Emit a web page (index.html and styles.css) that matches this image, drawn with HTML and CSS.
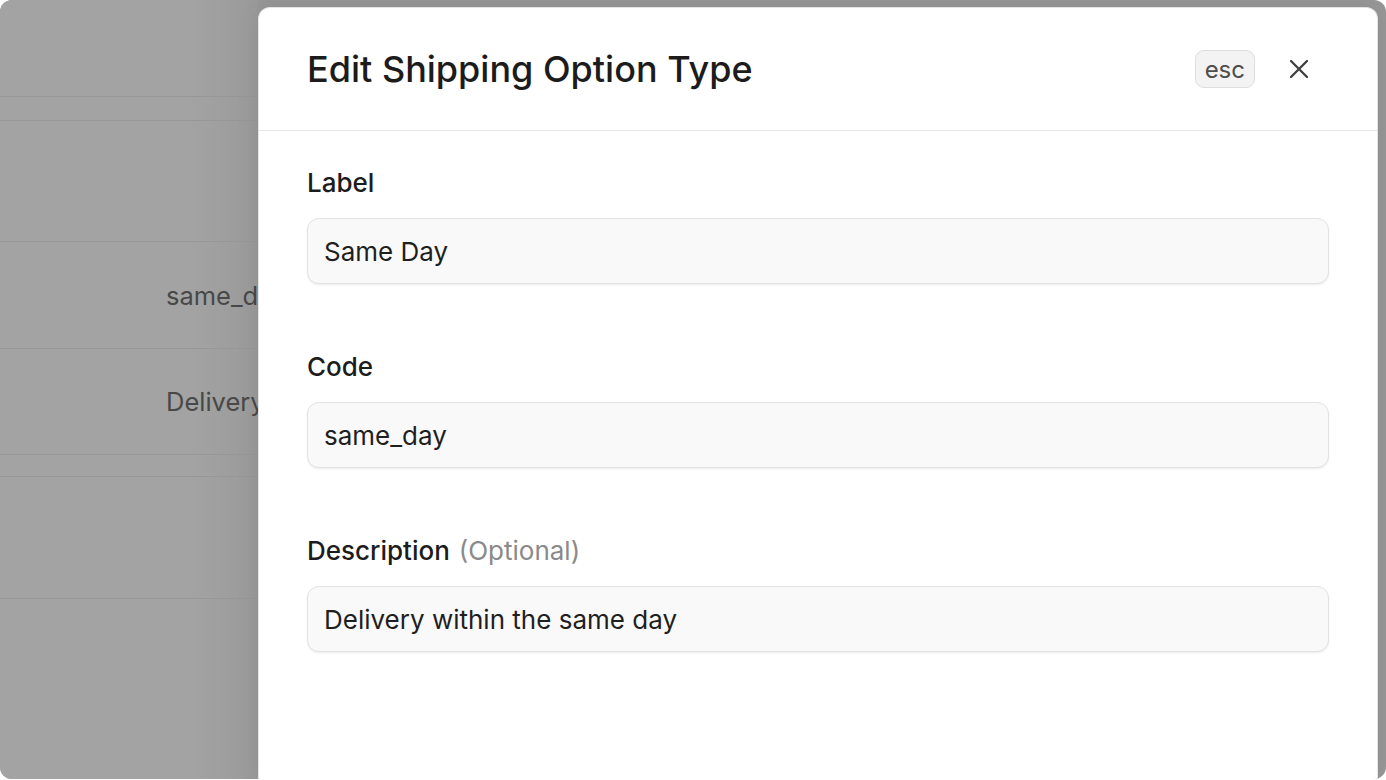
FILE: index.html
```html
<!DOCTYPE html>
<html lang="en">
<head>
<meta charset="utf-8">
<title>Edit Shipping Option Type</title>
<link rel="stylesheet" href="styles.css">
</head>
<body>
<div class="screen">
  <div class="backdrop">
    <div class="bg-row bg-head"></div>
    <div class="bg-row bg-gap"></div>
    <div class="bg-row bg-r1"></div>
    <div class="bg-row bg-r2"><span class="bg-text">same_day</span></div>
    <div class="bg-row bg-r3"><span class="bg-text">Delivery within the same day</span></div>
    <div class="bg-row bg-gap2"></div>
    <div class="bg-row bg-r4"></div>
  </div>
  <div class="modal-wrap">
    <div class="modal">
      <div class="modal-header">
        <h1 class="modal-title">Edit Shipping Option Type</h1>
        <div class="header-actions">
          <span class="kbd">esc</span>
          <button class="close-btn" aria-label="Close">
            <svg width="20" height="20" viewBox="0 0 20 20" fill="none" stroke="#3f3f3f" stroke-width="2.3" stroke-linecap="round"><path d="M2 2L18 18M18 2L2 18"/></svg>
          </button>
        </div>
      </div>
      <div class="modal-body">
        <div class="field">
          <label class="field-label">Label</label>
          <div class="input">Same Day</div>
        </div>
        <div class="field">
          <label class="field-label">Code</label>
          <div class="input">same_day</div>
        </div>
        <div class="field">
          <label class="field-label">Description <span class="optional">(Optional)</span></label>
          <div class="input">Delivery within the same day</div>
        </div>
      </div>
    </div>
  </div>
</div>
</body>
</html>
```
FILE: styles.css
```css
* { box-sizing: border-box; }
html, body { margin: 0; padding: 0; background: #ffffff; }
body { font-family: Inter, "Noto Sans", sans-serif; }

.screen {
  width: 1386px;
  height: 779px;
  border-radius: 12px;
  overflow: hidden;
  display: flex;
  background: #979797;
}

.backdrop {
  width: 258px;
  flex: none;
  overflow: hidden;
  background: linear-gradient(to right, #a3a3a3 0, #a3a3a3 190px, #9a9a9a 258px);
  display: flex;
  flex-direction: column;
}
.bg-row {
  border-bottom: 1px solid #979797;
  display: flex;
  align-items: center;
  padding-left: 166px;
  flex: none;
}
.bg-head { height: 97px; }
.bg-gap { height: 24px; }
.bg-r1 { height: 121px; }
.bg-r2 { height: 107px; }
.bg-r3 { height: 106px; }
.bg-gap2 { height: 22px; }
.bg-r4 { height: 122px; }
.bg-text {
  font-size: 25.5px;
  color: #484848;
  white-space: nowrap;
}

.modal-wrap {
  flex: 1;
  padding: 7px 8px 0 0;
  display: flex;
}
.modal {
  flex: 1;
  background: #ffffff;
  border: 1px solid #e4e4e4;
  border-bottom: none;
  border-radius: 12px 12px 0 0;
  box-shadow: 0 0 24px rgba(0,0,0,0.08);
  display: flex;
  flex-direction: column;
}

.modal-header {
  height: 123px;
  flex: none;
  border-bottom: 1px solid #e6e6e6;
  display: flex;
  align-items: center;
  justify-content: space-between;
  padding: 0 58px 0 48px;
}
.modal-title {
  margin: 0;
  font-size: 36px;
  font-weight: 500;
  color: #1c1c1c;
}
.header-actions {
  display: flex;
  align-items: center;
  gap: 24px;
}
.kbd {
  height: 38px;
  padding: 0 9px;
  display: inline-flex;
  align-items: center;
  background: #f3f3f3;
  border: 1px solid #dedede;
  border-radius: 9px;
  font-size: 24px;
  color: #4e4e4e;
}
.close-btn {
  width: 40px;
  height: 40px;
  border: none;
  background: transparent;
  padding: 0;
  display: flex;
  align-items: center;
  justify-content: center;
}

.modal-body {
  padding: 36px 48px 0 48px;
  display: flex;
  flex-direction: column;
  gap: 67px;
}
.field {
  display: flex;
  flex-direction: column;
  gap: 19px;
}
.field-label {
  font-size: 26px;
  line-height: 32px;
  font-weight: 500;
  color: #1c1c1c;
}
.optional {
  font-weight: 400;
  color: #8a8a8a;
  margin-left: 2px;
}
.input {
  height: 66px;
  border: 1px solid #e3e3e3;
  border-radius: 12px;
  background: #f9f9f9;
  box-shadow: 0 1px 2px rgba(0,0,0,0.08);
  display: flex;
  align-items: center;
  padding-left: 16px;
  font-size: 26px;
  color: #1f1f1f;
}
```
